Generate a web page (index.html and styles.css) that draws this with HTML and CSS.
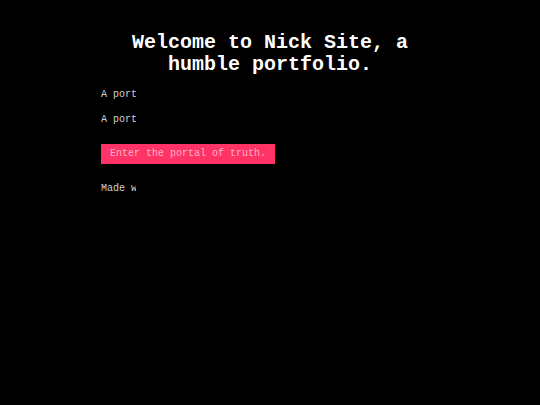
FILE: index.html
```html
<!DOCTYPE html>
<html>
<head>
<meta charset="utf-8">
<link rel="stylesheet" href="styles.css">
</head>
<body>
<main class="page">
  <h1 class="title">Welcome to Nick Site, a humble portfolio.</h1>
  <p class="type">A portfolio of things I have made.</p>
  <p class="type">A portfolio of things I have learned.</p>
  <a class="portal" href="#">Enter the portal of truth.</a>
  <p class="type">Made with love.</p>
</main>
</body>
</html>
```
FILE: styles.css
```css
html, body {
  margin: 0;
  padding: 0;
  background: #000;
}
body {
  font-family: "Courier New", Courier, "Nimbus Mono PS", "Nimbus Mono L", "Liberation Mono", monospace;
  color: #d0d0d0;
}
.page {
  width: 340px;
  margin: 0 auto;
  padding-top: 32px;
  display: flex;
  flex-direction: column;
  align-items: flex-start;
}
.title {
  align-self: stretch;
  margin: 0 0 13px 0;
  font-size: 20px;
  line-height: 22px;
  font-weight: bold;
  color: #fff;
  text-align: center;
}
.type {
  margin: 0 0 13px 1px;
  font-size: 10px;
  line-height: 12px;
  width: 35px;
  overflow: hidden;
  white-space: nowrap;
}
.portal {
  display: block;
  margin: 5px 0 19px 1px;
  padding: 4px 9px;
  font-size: 10px;
  line-height: 12px;
  background: #ff3366;
  color: #ffb3c8;
  text-decoration: none;
  white-space: nowrap;
}
```
